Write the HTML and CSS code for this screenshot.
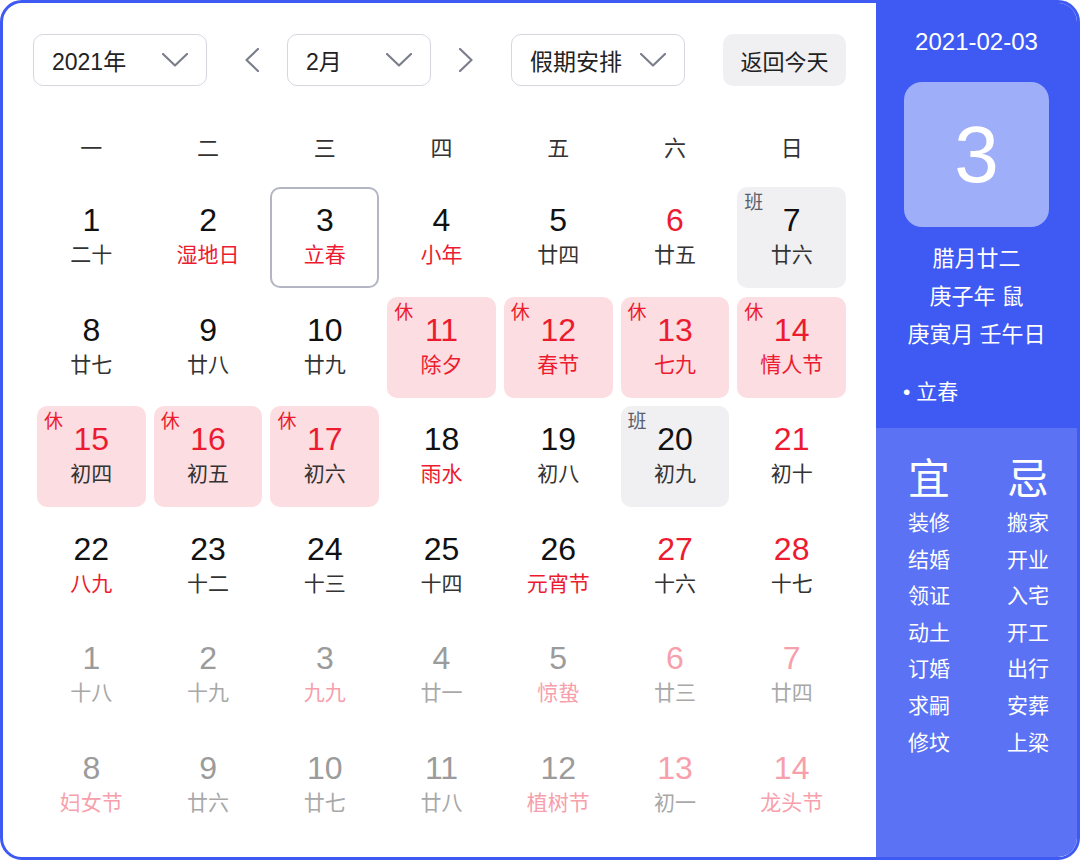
FILE: index.html
```html
<!DOCTYPE html>
<html lang="zh-CN">
<head>
<meta charset="utf-8">
<link rel="stylesheet" href="styles.css">
</head>
<body>
<div class="card">
  <div class="main">
    <div class="controls">
      <div class="select sel-year"><span>2021年</span><svg class="chev" viewBox="0 0 26 14"><polyline points="1,1 13,12.5 25,1"/></svg></div>
      <div class="arrow arrow-prev"><svg viewBox="0 0 14 24"><polyline points="13,1 1.5,12 13,23"/></svg></div>
      <div class="select sel-month"><span>2月</span><svg class="chev" viewBox="0 0 26 14"><polyline points="1,1 13,12.5 25,1"/></svg></div>
      <div class="arrow arrow-next"><svg viewBox="0 0 14 24"><polyline points="1,1 12.5,12 1,23"/></svg></div>
      <div class="select sel-holiday"><span>假期安排</span><svg class="chev" viewBox="0 0 26 14"><polyline points="1,1 13,12.5 25,1"/></svg></div>
      <div class="today-btn">返回今天</div>
    </div>
    <div class="weekdays">
      <div>一</div><div>二</div><div>三</div><div>四</div><div>五</div><div>六</div><div>日</div>
    </div>
    <div class="grid">
      <div class="cell"><div class="num">1</div><div class="lunar">二十</div></div>
      <div class="cell"><div class="num">2</div><div class="lunar red">湿地日</div></div>
      <div class="cell today"><div class="num">3</div><div class="lunar red">立春</div></div>
      <div class="cell"><div class="num">4</div><div class="lunar red">小年</div></div>
      <div class="cell"><div class="num">5</div><div class="lunar">廿四</div></div>
      <div class="cell"><div class="num red">6</div><div class="lunar">廿五</div></div>
      <div class="cell work"><span class="badge">班</span><div class="num">7</div><div class="lunar">廿六</div></div>

      <div class="cell"><div class="num">8</div><div class="lunar">廿七</div></div>
      <div class="cell"><div class="num">9</div><div class="lunar">廿八</div></div>
      <div class="cell"><div class="num">10</div><div class="lunar">廿九</div></div>
      <div class="cell rest"><span class="badge">休</span><div class="num red">11</div><div class="lunar red">除夕</div></div>
      <div class="cell rest"><span class="badge">休</span><div class="num red">12</div><div class="lunar red">春节</div></div>
      <div class="cell rest"><span class="badge">休</span><div class="num red">13</div><div class="lunar red">七九</div></div>
      <div class="cell rest"><span class="badge">休</span><div class="num red">14</div><div class="lunar red">情人节</div></div>

      <div class="cell rest"><span class="badge">休</span><div class="num red">15</div><div class="lunar">初四</div></div>
      <div class="cell rest"><span class="badge">休</span><div class="num red">16</div><div class="lunar">初五</div></div>
      <div class="cell rest"><span class="badge">休</span><div class="num red">17</div><div class="lunar">初六</div></div>
      <div class="cell"><div class="num">18</div><div class="lunar red">雨水</div></div>
      <div class="cell"><div class="num">19</div><div class="lunar">初八</div></div>
      <div class="cell work"><span class="badge">班</span><div class="num">20</div><div class="lunar">初九</div></div>
      <div class="cell"><div class="num red">21</div><div class="lunar">初十</div></div>

      <div class="cell"><div class="num">22</div><div class="lunar red">八九</div></div>
      <div class="cell"><div class="num">23</div><div class="lunar">十二</div></div>
      <div class="cell"><div class="num">24</div><div class="lunar">十三</div></div>
      <div class="cell"><div class="num">25</div><div class="lunar">十四</div></div>
      <div class="cell"><div class="num">26</div><div class="lunar red">元宵节</div></div>
      <div class="cell"><div class="num red">27</div><div class="lunar">十六</div></div>
      <div class="cell"><div class="num red">28</div><div class="lunar">十七</div></div>

      <div class="cell faded"><div class="num">1</div><div class="lunar">十八</div></div>
      <div class="cell faded"><div class="num">2</div><div class="lunar">十九</div></div>
      <div class="cell faded"><div class="num">3</div><div class="lunar red">九九</div></div>
      <div class="cell faded"><div class="num">4</div><div class="lunar">廿一</div></div>
      <div class="cell faded"><div class="num">5</div><div class="lunar red">惊蛰</div></div>
      <div class="cell faded"><div class="num red">6</div><div class="lunar">廿三</div></div>
      <div class="cell faded"><div class="num red">7</div><div class="lunar">廿四</div></div>

      <div class="cell faded"><div class="num">8</div><div class="lunar red">妇女节</div></div>
      <div class="cell faded"><div class="num">9</div><div class="lunar">廿六</div></div>
      <div class="cell faded"><div class="num">10</div><div class="lunar">廿七</div></div>
      <div class="cell faded"><div class="num">11</div><div class="lunar">廿八</div></div>
      <div class="cell faded"><div class="num">12</div><div class="lunar red">植树节</div></div>
      <div class="cell faded"><div class="num red">13</div><div class="lunar">初一</div></div>
      <div class="cell faded"><div class="num red">14</div><div class="lunar red">龙头节</div></div>
    </div>
  </div>
  <div class="side">
    <div class="side-top">
      <div class="side-date">2021-02-03</div>
      <div class="big-day">3</div>
      <div class="side-lunar">
        <div>腊月廿二</div>
        <div>庚子年 鼠</div>
        <div>庚寅月 壬午日</div>
      </div>
      <div class="side-term">• 立春</div>
    </div>
    <div class="side-bottom">
      <div class="yiji">
        <div class="col">
          <div class="head">宜</div>
          <div>装修</div><div>结婚</div><div>领证</div><div>动土</div><div>订婚</div><div>求嗣</div><div>修坟</div>
        </div>
        <div class="col">
          <div class="head">忌</div>
          <div>搬家</div><div>开业</div><div>入宅</div><div>开工</div><div>出行</div><div>安葬</div><div>上梁</div>
        </div>
      </div>
    </div>
  </div>
</div>
</body>
</html>
```

FILE: styles.css
```css
* { box-sizing: border-box; }
html, body { margin: 0; padding: 0; background: #ffffff; }
body {
  font-family: "Liberation Sans", "Noto Sans CJK SC", sans-serif;
  color: #222;
}
.card {
  width: 1080px;
  height: 860px;
  border: 3px solid #3e5af3;
  border-radius: 22px;
  overflow: hidden;
  display: flex;
  background: #fff;
}
.main {
  width: 873px;
  padding: 31px 30px 0 34px;
}
.controls {
  display: flex;
  align-items: center;
  height: 52px;
  margin-left: -4px;
}
.select {
  height: 52px;
  border: 1.5px solid #d6d7de;
  border-radius: 10px;
  display: flex;
  align-items: center;
  justify-content: space-between;
  padding: 0 18px 0 18px;
  font-size: 23px;
  color: #222;
}
.sel-year { width: 174px; }
.sel-month { width: 144px; }
.sel-holiday { width: 174px; }
.chev {
  width: 26px;
  height: 14px;
  fill: none;
  stroke: #7b7f8c;
  stroke-width: 2.2;
  stroke-linecap: round;
  stroke-linejoin: round;
}
.arrow {
  width: 80px;
  height: 52px;
  display: flex;
  align-items: center;
}
.arrow-prev { padding-left: 38px; }
.arrow-next { padding-left: 28px; }
.arrow svg {
  width: 14px;
  height: 24px;
  fill: none;
  stroke: #7b7f8c;
  stroke-width: 2.2;
  stroke-linecap: round;
  stroke-linejoin: round;
}
.today-btn {
  margin-left: 38px;
  width: 123px;
  height: 52px;
  border-radius: 10px;
  background: #f0f0f3;
  display: flex;
  align-items: center;
  justify-content: center;
  font-size: 22px;
  color: #222;
}
.weekdays {
  margin-top: 38px;
  height: 44px;
  display: grid;
  grid-template-columns: repeat(7, 1fr);
  column-gap: 8px;
  align-items: center;
  text-align: center;
  font-size: 22px;
  color: #333;
}
.grid {
  margin-top: 19px;
  display: grid;
  grid-template-columns: repeat(7, 1fr);
  grid-auto-rows: 101px;
  column-gap: 8px;
  row-gap: 8.6px;
}
.cell {
  position: relative;
  border-radius: 10px;
  padding-top: 15px;
  text-align: center;
}
.num {
  font-size: 32px;
  line-height: 36px;
  color: #111;
}
.lunar {
  margin-top: 4px;
  font-size: 21px;
  line-height: 26px;
  color: #333;
}
.red { color: #ec1b30; }
.today {
  border: 2.5px solid #b3b5c2;
  padding-top: 12.5px;
}
.rest { background: #fcdde1; }
.work { background: #f0f0f3; }
.badge {
  position: absolute;
  top: 5px;
  left: 7px;
  font-size: 19px;
  line-height: 22px;
}
.rest .badge { color: #ec1b30; }
.work .badge { color: #5a5e6c; }
.faded .num { color: #9b9b9b; }
.faded .lunar { color: #a8a8a8; }
.faded .red { color: #f7a0ac; }

.side {
  flex: 1;
  display: flex;
  flex-direction: column;
  color: #fff;
}
.side-top {
  background: #3e5af3;
  height: 425px;
  padding-top: 25px;
  display: flex;
  flex-direction: column;
  align-items: center;
}
.side-date {
  font-size: 24px;
  line-height: 28px;
}
.big-day {
  margin-top: 26px;
  width: 145px;
  height: 145px;
  border-radius: 18px;
  background: #9faef8;
  display: flex;
  align-items: center;
  justify-content: center;
  font-size: 80px;
  font-family: "Liberation Sans", sans-serif;
  font-weight: 400;
}
.side-lunar {
  margin-top: 13px;
  text-align: center;
  font-size: 22px;
  line-height: 38px;
}
.side-term {
  align-self: flex-start;
  padding-left: 27px;
  margin-top: 19px;
  font-size: 21px;
  line-height: 38px;
}
.side-bottom {
  flex: 1;
  background: #5b72f4;
  padding-top: 27px;
}
.yiji {
  display: flex;
  justify-content: center;
  gap: 57px;
  padding-left: 4px;
}
.col {
  display: flex;
  flex-direction: column;
  align-items: center;
  font-size: 21px;
  line-height: 36.6px;
}
.col .head {
  font-size: 42px;
  line-height: 50px;
}
```
